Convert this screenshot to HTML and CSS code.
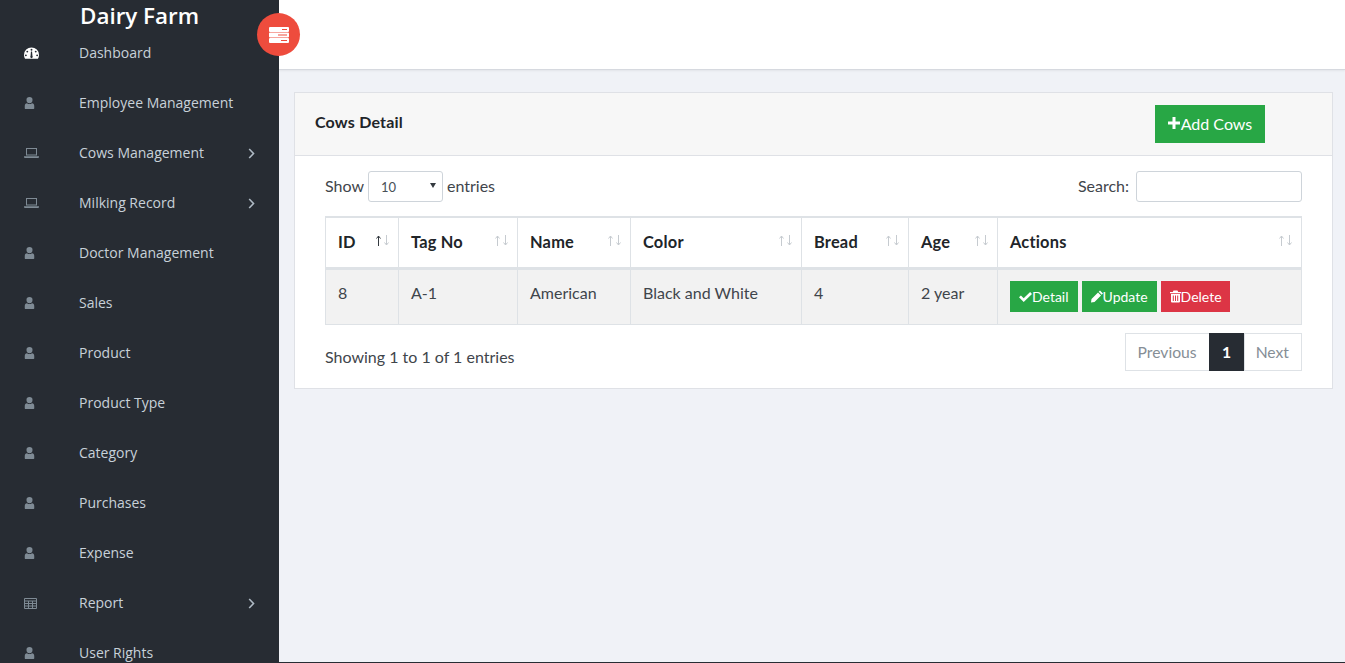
FILE: index.html
```html
<!DOCTYPE html>
<html lang="en">
<head>
<meta charset="utf-8">
<title>Dairy Farm</title>
<link rel="stylesheet" href="styles.css">
</head>
<body>
<div class="app">
  <aside class="sidebar">
    <div class="brand">Dairy Farm</div>
    <nav class="menu">
      <a class="item active"><svg class="ico" viewBox="0 0 16 12"><path d="M8 0a8 8 0 0 0-8 8c0 1.600.5 3 1.200 4h13.600c.7-1 1.200-2.400 1.200-4a8 8 0 0 0-8-8zM8 1.500a1 1 0 1 1 0 2 1 1 0 0 1 0-2zM3.500 3.500a1 1 0 1 1 0 2 1 1 0 0 1 0-2zm9 0a1 1 0 1 1 0 2 1 1 0 0 1 0-2zM2 7.500a1 1 0 1 1 0 2 1 1 0 0 1 0-2zm12 0a1 1 0 1 1 0 2 1 1 0 0 1 0-2zM8.600 4.500l.4 4.800a1.300 1.300 0 1 1-2 0l.4-4.800z" fill-rule="evenodd"/></svg><span>Dashboard</span></a>
      <a class="item"><svg class="ico user" viewBox="0 0 10 12"><use href="#u"/></svg><span>Employee Management</span></a>
      <a class="item"><svg class="ico" viewBox="0 0 15 10"><use href="#l"/></svg><span>Cows Management</span><svg class="chev" viewBox="0 0 7 11"><path d="M1.200 1l4.300 4.500-4.300 4.500"/></svg></a>
      <a class="item"><svg class="ico" viewBox="0 0 15 10"><use href="#l"/></svg><span>Milking Record</span><svg class="chev" viewBox="0 0 7 11"><path d="M1.200 1l4.300 4.500-4.300 4.500"/></svg></a>
      <a class="item"><svg class="ico user" viewBox="0 0 10 12"><use href="#u"/></svg><span>Doctor Management</span></a>
      <a class="item"><svg class="ico user" viewBox="0 0 10 12"><use href="#u"/></svg><span>Sales</span></a>
      <a class="item"><svg class="ico user" viewBox="0 0 10 12"><use href="#u"/></svg><span>Product</span></a>
      <a class="item"><svg class="ico user" viewBox="0 0 10 12"><use href="#u"/></svg><span>Product Type</span></a>
      <a class="item"><svg class="ico user" viewBox="0 0 10 12"><use href="#u"/></svg><span>Category</span></a>
      <a class="item"><svg class="ico user" viewBox="0 0 10 12"><use href="#u"/></svg><span>Purchases</span></a>
      <a class="item"><svg class="ico user" viewBox="0 0 10 12"><use href="#u"/></svg><span>Expense</span></a>
      <a class="item"><svg class="ico grid" viewBox="0 0 13 11"><path d="M.5.500h12v10H.500zM.5 3h12M.5 5.500h12M.5 8h12M4.500 3v7.500M8.500 3v7.500" fill="none" stroke="#7f8b95"/></svg><span>Report</span><svg class="chev" viewBox="0 0 7 11"><path d="M1.200 1l4.300 4.500-4.300 4.500"/></svg></a>
      <a class="item"><svg class="ico user" viewBox="0 0 10 12"><use href="#u"/></svg><span>User Rights</span></a>
    </nav>
  </aside>
  <div class="toggle"><svg viewBox="0 0 20 16"><path fill-rule="evenodd" d="M1 0h18a1 1 0 0 1 1 1v3a1 1 0 0 1-1 1H1a1 1 0 0 1-1-1V1a1 1 0 0 1 1-1zm12 2v1h5V2zM1 5.500h18a1 1 0 0 1 1 1v3a1 1 0 0 1-1 1H1a1 1 0 0 1-1-1v-3a1 1 0 0 1 1-1zm8 2v1h9v-1zM1 11h18a1 1 0 0 1 1 1v3a1 1 0 0 1-1 1H1a1 1 0 0 1-1-1v-3a1 1 0 0 1 1-1zm11 2v1h6v-1z"/></svg></div>
  <main class="main">
    <header class="topbar"></header>
    <section class="content">
      <div class="card">
        <div class="card-head">
          <strong class="card-title">Cows Detail</strong>
          <a class="btn btn-add"><svg class="bi plus" viewBox="0 0 12 12"><path d="M4.500 0h3v4.500H12v3H7.500V12h-3V7.500H0v-3h4.500z"/></svg>Add Cows</a>
        </div>
        <div class="card-body">
          <div class="controls">
            <label class="ctl">Show <span class="select">10<i class="caret"></i></span> entries</label>
            <label class="ctl ctl-search">Search: <span class="search"></span></label>
          </div>
          <table class="tbl">
            <thead>
              <tr>
                <th class="c1"><span>ID</span><svg class="sort on" viewBox="0 0 14 11"><use href="#s"/></svg></th>
                <th class="c2"><span>Tag No</span><svg class="sort" viewBox="0 0 14 11"><use href="#s"/></svg></th>
                <th class="c3"><span>Name</span><svg class="sort" viewBox="0 0 14 11"><use href="#s"/></svg></th>
                <th class="c4"><span>Color</span><svg class="sort" viewBox="0 0 14 11"><use href="#s"/></svg></th>
                <th class="c5"><span>Bread</span><svg class="sort" viewBox="0 0 14 11"><use href="#s"/></svg></th>
                <th class="c6"><span>Age</span><svg class="sort" viewBox="0 0 14 11"><use href="#s"/></svg></th>
                <th><span>Actions</span><svg class="sort" viewBox="0 0 14 11"><use href="#s"/></svg></th>
              </tr>
            </thead>
            <tbody>
              <tr>
                <td>8</td><td>A-1</td><td>American</td><td>Black and White</td><td>4</td><td>2 year</td>
                <td class="acts">
                  <a class="btn btn-sm green"><svg class="bi check" viewBox="0 0 13 10"><path d="M4.700 10L0 5.300l1.900-1.900 2.800 2.800L11.100 0 13 1.900z"/></svg>Detail</a>
                  <a class="btn btn-sm green"><svg class="bi pencil" viewBox="0 0 12 12"><path d="M9 0l3 3-1.300 1.300-3-3zM7 2l3 3-6.500 6.500L0 12l.5-3.500z"/></svg>Update</a>
                  <a class="btn btn-sm red"><svg class="bi trash" viewBox="0 0 11 12"><path fill-rule="evenodd" d="M3.500 0h4l.7 1.500H11v1.200H0V1.500h2.800zM1 3.500h9V11a1 1 0 0 1-1 1H2a1 1 0 0 1-1-1zm1.800 1.500v5.500h1V5zm2.200 0v5.500h1V5zm2.200 0v5.500h1V5z"/></svg>Delete</a>
                </td>
              </tr>
            </tbody>
          </table>
          <div class="foot">
            <div class="info">Showing 1 to 1 of 1 entries</div>
            <div class="pager"><a class="pg">Previous</a><a class="pg cur">1</a><a class="pg">Next</a></div>
          </div>
        </div>
      </div>
    </section>
  </main>
</div>
<svg class="defs" aria-hidden="true">
  <symbol id="u" viewBox="0 0 10 12"><path d="M5 0a3 3 0 0 1 3 3.200C8 5 6.700 6.300 5 6.300S2 5 2 3.200A3 3 0 0 1 5 0zM2.500 6.200C3.200 6.800 4 7.100 5 7.100s1.800-.3 2.500-.9C9 6.400 10 7.400 10 9.500V11a1 1 0 0 1-1 1H1a1 1 0 0 1-1-1V9.500c0-2.100 1-3.100 2.500-3.300z"/></symbol>
  <symbol id="l" viewBox="0 0 15 10"><path fill-rule="evenodd" d="M2 0h11v7.500H2zm1 1v5.500h9V1zM0 8.300h15V9a1 1 0 0 1-1 1H1a1 1 0 0 1-1-1z"/></symbol>
  <symbol id="s" viewBox="0 0 14 11"><path class="up" d="M2.500 11V1M.5 3.500L2.500 1l2 2.500" fill="none"/><path class="down" d="M10.500 0v10M8.500 7.500l2 2.500 2-2.500" fill="none"/></symbol>
</svg>
</body>
</html>
```
FILE: styles.css
```css
* { box-sizing: border-box; }
html, body { margin: 0; height: 100%; overflow: hidden; }
body { font-family: "Open Sans", sans-serif; background: #f0f2f7; color: #212529; border-bottom: 1px solid #272c33; }
.app { display: flex; height: 662px; position: relative; }
.defs { width: 0; height: 0; overflow: hidden; display: block; }
.sidebar { width: 279px; flex: none; background: #272c33; overflow: hidden; }
.brand { height: 28px; padding-left: 80px; font-size: 22.400px; font-weight: 600; line-height: 32px; color: #fff; }
.menu { display: flex; flex-direction: column; }
.item { display: flex; align-items: center; height: 50px; flex: none; padding-left: 24px; padding-right: 24px; font-size: 14px; color: #c8d1d9; }
.item span { flex: 1; margin-bottom: 2px; }
.ico { width: 15px; height: 12px; margin-right: 40px; flex: none; fill: #7f8b95; }
.item.active .ico { fill: #fff; }
.ico.user { width: 11px; height: 12px; margin-right: 44px; }
.ico.grid { width: 13px; height: 11px; margin-right: 42px; }
.chev { width: 7px; height: 11px; fill: none; stroke: #aeb9c4; stroke-width: 1.600; }
.toggle { position: absolute; left: 257px; top: 13px; width: 43px; height: 43px; border-radius: 50%; background: #ee4c3d; display: flex; align-items: center; justify-content: center; z-index: 2; }
.toggle svg { width: 20px; height: 16px; fill: #fff; }
.main { flex: 1; min-width: 0; display: flex; flex-direction: column; font-family: Lato, sans-serif; }
.topbar { height: 70px; flex: none; background: #fff; border-bottom: 1px solid #d6d9df; box-shadow: 0 1px 2px rgba(0,0,0,.06); }
.content { padding: 22px 12px 0 15px; }
.card { background: #fff; border: 1px solid #dfe1e6; }
.card-head { height: 63px; background: #f7f7f7; border-bottom: 1px solid #dfe1e6; display: flex; align-items: center; padding: 0 67px 0 20px; justify-content: space-between; }
.card-title { font-size: 16px; font-weight: 700; letter-spacing: .2px; position: relative; top: -3px; }
.btn { display: inline-flex; align-items: center; color: #fff; white-space: nowrap; }
.btn-add { width: 110px; height: 38px; background: #28a745; font-size: 16px; justify-content: center; padding-bottom: 2px; }
.bi { fill: #fff; flex: none; }
.plus { width: 12px; height: 12px; margin-right: 1px; }
.card-body { padding: 15px 30px 17px; }
.controls { display: flex; justify-content: space-between; height: 31px; margin-bottom: 14px; }
.ctl { display: flex; align-items: center; gap: 4px; font-size: 16px; color: #3f454b; padding-bottom: 2px; }
.ctl-search { gap: 7px; }
.select { width: 75px; height: 31px; margin-bottom: -2px; border: 1px solid #ced4da; border-radius: 3px; padding-left: 12px; font-size: 13px; color: #495057; display: flex; align-items: center; position: relative; }
.caret { position: absolute; right: 6px; top: 11px; border-left: 3px solid transparent; border-right: 3px solid transparent; border-top: 5px solid #343a40; }
.search { width: 166px; height: 31px; margin-bottom: -2px; border: 1px solid #ced4da; border-radius: 3px; background: #fff; }
.tbl { width: 977px; border-collapse: collapse; table-layout: fixed; font-size: 16px; }
.tbl th, .tbl td { border: 1px solid #dee2e6; text-align: left; padding: 0 12px; color: #3f454b; }
.tbl thead th { height: 51px; padding-bottom: 2px; font-size: 16.400px; letter-spacing: .2px; font-weight: 700; border-top-width: 2px; border-bottom: 3px solid #dee2e6; color: #212529; position: relative; }
.tbl tbody tr { background: #f2f2f2; }
.tbl tbody td { height: 56px; vertical-align: top; padding-top: 11px; line-height: 24px; }
.c1 { width: 73px; } .c2 { width: 119px; } .c3 { width: 113px; } .c4 { width: 171px; } .c5 { width: 107px; } .c6 { width: 89px; }
.sort { position: absolute; right: 8px; top: 17px; width: 14px; height: 11px; --up: #c6cbd0; }
.sort.on { --up: #343a40; }
.up { stroke: var(--up); stroke-width: 1; }
.down { stroke: #c6cbd0; stroke-width: 1; }
.acts { white-space: nowrap; }
.acts .btn { margin-right: 4px; }
.tbl .acts { font-size: 0; }
.btn-sm { height: 31px; font-size: 14px; padding: 1px 9px 0; vertical-align: top; }
.green { background: #28a745; }
.red { background: #dc3545; padding-right: 8px; }
.check { width: 13px; height: 10px; }
.pencil { width: 12px; height: 13px; }
.trash { width: 11px; height: 13px; }
.foot { display: flex; justify-content: space-between; margin-top: 8px; }
.info { font-size: 16px; padding-top: 14px; color: #3f454b; }
.pager { display: flex; height: 38px; font-size: 15.700px; }
.pg { display: flex; align-items: center; padding: 0 12px; border: 1px solid #dee2e6; color: #868e96; margin-left: -1px; }
.pg:last-child { padding-left: 11px; }
.pg.cur { background: #272c33; border-color: #272c33; color: #fff; font-weight: 700; width: 36px; justify-content: center; }
```
